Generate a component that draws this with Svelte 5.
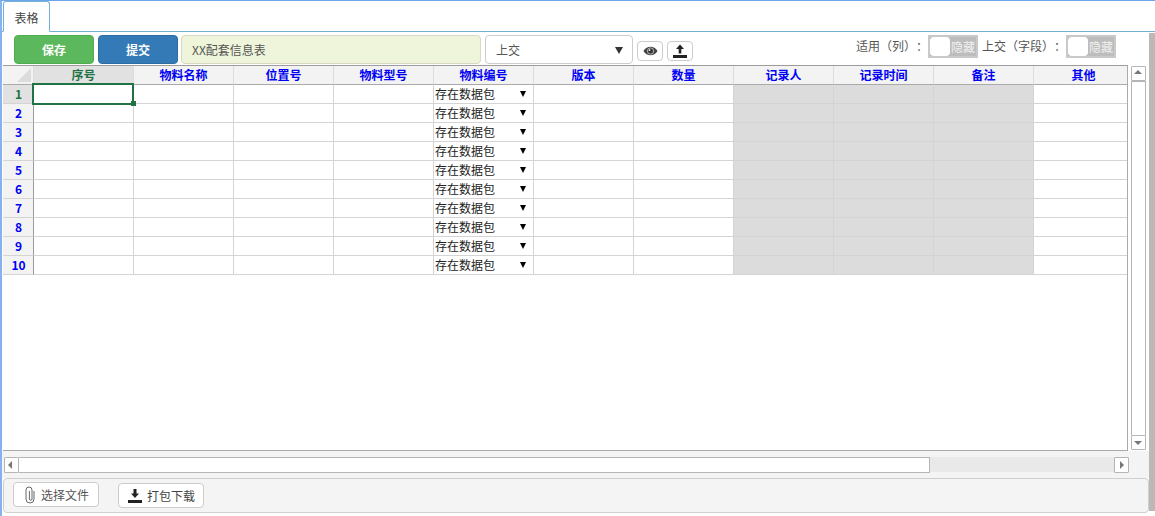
<script>
  const cols = ['物料名称','位置号','物料型号','物料编号','版本','数量','记录人','记录时间','备注','其他'];
  const rows = [1,2,3,4,5,6,7,8,9,10];
  const cellClass = (i) => (i >= 6 && i <= 8 ? 'cell gray' : 'cell');
</script>

<div class="page">
  <div class="main">
    <div class="tabs"><div class="tab">表格</div></div>

    <div class="toolbar">
      <button class="btn save">保存</button>
      <button class="btn submit">提交</button>
      <div class="title">XX配套信息表</div>
      <div class="select">上交<span class="caret"></span></div>
      <button class="icon-btn" aria-label="view">
        <svg width="15" height="10" viewBox="0 0 16 10"><path d="M0.5 5C2.5 1.8 5 .4 8 .4s5.500 1.400 7.500 4.600C13.500 8.200 11 9.600 8 9.600S2.500 8.200 .5 5z" fill="#444"/><circle cx="8" cy="5" r="3.300" fill="#333" stroke="#ddd" stroke-width=".8"/><circle cx="7" cy="4" r="1" fill="#fff"/></svg>
      </button>
      <button class="icon-btn" aria-label="upload">
        <svg width="14" height="14" viewBox="0 0 14 14"><path d="M7 .5L11 5H8.300v4.500H5.700V5H3z" fill="#222"/><rect y="11" width="14" height="3" fill="#222"/></svg>
      </button>
      <div class="switches">
        <span>适用（列）：</span>
        <div class="toggle"><i class="knob"></i><em>隐藏</em></div>
        <span class="second">上交（字段）：</span>
        <div class="toggle"><i class="knob"></i><em>隐藏</em></div>
      </div>
    </div>

    <div class="sheet-row">
      <div class="sheet">
        <div class="grid">
          <div class="corner"><span></span></div>
          <div class="head active">序号</div>
          {#each cols as c}<div class="head">{c}</div>{/each}
          {#each rows as r}
            <div class="num" class:cur={r === 1}>{r}</div>
            <div class="cell" class:selected={r === 1}>{#if r === 1}<i class="ring"></i><i class="handle"></i>{/if}</div>
            {#each cols as c, i}
              <div class={cellClass(i)}>{#if i === 3}<span class="pack">存在数据包</span><span class="mini"></span>{/if}</div>
            {/each}
          {/each}
        </div>
      </div>
      <div class="vbar">
        <div class="arrow-btn"><span class="up"></span></div>
        <div class="vthumb"></div>
        <div class="arrow-btn"><span class="down"></span></div>
      </div>
    </div>

    <div class="hbar">
      <div class="harrow"><span class="left"></span></div>
      <div class="hthumb"></div>
      <div class="htrack"></div>
      <div class="harrow"><span class="right"></span></div>
    </div>

    <div class="footer">
      <button class="foot-btn file">
        <svg width="10" height="18" viewBox="0 0 10 18" fill="none" stroke="#666" stroke-width="1"><path d="M9 5v8a4 4 0 0 1-8 0V4a3 3 0 0 1 6 0v9a1.300 1.300 0 0 1-2.600 0V5"/></svg>
        选择文件
      </button>
      <button class="foot-btn pack-btn">
        <svg width="14" height="14" viewBox="0 0 14 14"><path d="M5.500 0h3v4.500H11L7 9 3 4.500h2.500z" fill="#222"/><rect y="11" width="14" height="3" fill="#222"/></svg>
        打包下载
      </button>
    </div>
  </div>
  <div class="pagebar"></div>
</div>

<style>
  :global(body) { margin: 0; background: #fff; }
  .page {
    width: 1155px; height: 516px; box-sizing: border-box;
    border-top: 1px solid #6ea3ee; border-left: 2px solid #86b3f0;
    display: flex; overflow: hidden;
    font: 12px "Noto Sans CJK SC", "Liberation Sans", sans-serif; color: #555;
    text-spacing-trim: space-all;
  }
  .main { width: 1147px; display: flex; flex-direction: column; }
  .pagebar { width: 6px; margin-top: 32px; height: 478px; background: #bcb8b5; }

  .tabs { height: 31px; box-sizing: border-box; border-bottom: 1px solid #71b2d3; padding: 0 0 0 1px; margin-right: -6px; flex: none; position: relative; z-index: 1; }
  .tab {
    width: 47px; height: 31px; box-sizing: border-box;
    border: 1px solid #71b2d3; border-bottom: 1px solid #fff; border-radius: 3px 3px 0 0;
    text-align: center; line-height: 31px; color: #444; background: #fff;
  }

  .toolbar { height: 33px; display: flex; align-items: flex-start; padding: 3px 0 0 12px; box-sizing: border-box; flex: none; }
  button { font-family: inherit; padding: 0; cursor: pointer; }
  .btn {
    width: 80px; height: 29px; margin-right: 4px; border-radius: 4px; color: #fff;
    font-size: 12px; font-weight: 700; line-height: 27px;
  }
  .save { background: #5cb85c; border: 1px solid #4cae4c; }
  .submit { background: #337ab7; border: 1px solid #2e6da4; margin-right: 3px; }
  .title {
    width: 300px; height: 29px; box-sizing: border-box; margin-right: 4px;
    background: #eff5da; border: 1px solid #d8d8c4; border-radius: 4px;
    padding-left: 10px; line-height: 28px; color: #555;
  }
  .select {
    width: 148px; height: 29px; box-sizing: border-box; margin-right: 4px; position: relative;
    border: 1px solid #ccc; border-radius: 4px; background: #fff; padding-left: 10px; line-height: 28px;
  }
  .caret { position: absolute; right: 9px; top: 11px; border: 4px solid transparent; border-top: 7px solid #333; border-bottom: 0; }
  .icon-btn {
    width: 26px; height: 20px; margin: 6px 4px 0 0; box-sizing: border-box; background: #fff;
    border: 1px solid #ccc; border-radius: 4px; display: flex; align-items: center; justify-content: center;
  }
  .switches { display: flex; align-items: flex-start; margin-left: auto; margin-right: 33px; line-height: 22px; color: #555; }
  .second { margin-left: 4px; }
  .toggle {
    width: 50px; height: 23px; box-sizing: border-box; border: 2px solid #c9c9c9; background: #bdbdbd;
    display: flex; align-items: center; position: relative;
  }
  .toggle::before {
    content: ""; position: absolute; inset: -2px; pointer-events: none;
    background:
      linear-gradient(#f2f2f2, #f2f2f2) 1px 1px / 2px 2px no-repeat,
      linear-gradient(#f2f2f2, #f2f2f2) right 1px top 1px / 2px 2px no-repeat,
      linear-gradient(#f2f2f2, #f2f2f2) 1px bottom 1px / 2px 2px no-repeat,
      linear-gradient(#f2f2f2, #f2f2f2) right 1px bottom 1px / 2px 2px no-repeat;
  }
  .knob { width: 20px; height: 19px; background: #fff; border-radius: 4px; flex: none; }
  .toggle em { font-style: normal; color: #f1f1f1; font-size: 12px; line-height: 19px; white-space: nowrap; margin-left: 1px; width: 25px; overflow: hidden; }

  .sheet-row { display: flex; height: 386px; flex: none; margin-left: 1px; }
  .sheet { width: 1125px; box-sizing: border-box; border-top: 1px solid #9c9c9c; border-bottom: 1px solid #aaa; border-right: 1px solid #aaa; overflow: hidden; }
  .grid { display: grid; grid-template-columns: 31px repeat(11, 100px); grid-auto-rows: 19px; width: 1131px; grid-template-rows: 19px repeat(10, 19px); }
  .corner { background: #f3f3f3; border-right: 1px solid #dcdcdc; border-bottom: 1px solid #aaa; box-sizing: border-box; position: relative; }
  .corner span { position: absolute; right: 2px; bottom: 2px; border-style: solid; border-width: 0 0 14px 14px; border-color: transparent transparent #dcdcdc transparent; }
  .head {
    background: #f3f3f3; color: #0000f5; font-weight: 700; text-align: center; line-height: 17px; font-size: 12px;
    box-sizing: border-box; border-right: 1px solid #dcdcdc; border-bottom: 1px solid #aaa;
  }
  .head.active { background: #e1e1e1; color: #217346; }
  .num {
    background: #f3f3f3; color: #0000f5; font-weight: 700; text-align: center; line-height: 18px; font-size: 12px;
    box-sizing: border-box; border-right: 1px solid #9c9c9c; border-bottom: 1px solid #d4d4d4; padding-left: 1px;
  }
  .num.cur { background: #e1e1e1; color: #217346; }
  .cell {
    box-sizing: border-box; border-right: 1px solid #d4d4d4; border-bottom: 1px solid #d4d4d4;
    position: relative; color: #222; line-height: 18px;
  }
  .cell.gray { background: #dcdcdc; }
  .selected { z-index: 1; }
  .ring { position: absolute; left: -2px; right: -1px; top: -2px; bottom: -2px; border: 2px solid #217346; }
  .handle { position: absolute; right: -3px; bottom: -3px; width: 5px; height: 5px; background: #217346; }
  .pack { display: block; padding-left: 1px; font-size: 12px; color: #222; }
  .mini { position: absolute; right: 7px; top: 6px; border: 3px solid transparent; border-top: 6px solid #000; border-bottom: 0; border-left-width: 3.500px; border-right-width: 3.500px; }

  .vbar { width: 15px; margin-left: 3px; box-sizing: border-box; display: flex; flex-direction: column; height: 385px; padding-top: 1px; }
  .arrow-btn { height: 15px; flex: none; box-sizing: border-box; border: 1px solid #b5b5b5; background: #fff; position: relative; border-radius: 1px; }
  .vthumb { flex: 1; box-sizing: border-box; border: 1px solid #b5b5b5; border-bottom: 0; background: #fff; }
  .up, .down, .left, .right { position: absolute; width: 0; height: 0; border: 4px solid transparent; }
  .up { left: 2px; top: 3px; border-bottom-color: #777; border-top-width: 0; }
  .down { left: 2px; top: 5px; border-top-color: #777; border-bottom-width: 0; }

  .hbar { display: flex; height: 27px; background: #f4f4f4; box-sizing: border-box; padding: 6px 0 5px 2px; margin-right: 20px; flex: none; box-shadow: 20px 0 0 #f4f4f4; }
  .harrow { width: 15px; height: 16px; box-sizing: border-box; border: 1px solid #b5b5b5; background: #fff; position: relative; flex: none; border-radius: 1px; }
  .hthumb { width: 911px; height: 16px; box-sizing: border-box; border: 1px solid #b5b5b5; border-left: 0; background: #fff; flex: none; }
  .htrack { flex: 1; height: 15px; background: #e9e9e9; }
  .left { left: 3px; top: 3px; border-right-color: #777; border-left-width: 0; }
  .right { left: 5px; top: 3px; border-left-color: #777; border-right-width: 0; }

  .footer {
    height: 35px; box-sizing: border-box; margin-left: 1px; width: 1146px;
    background: #f4f4f4; border: 1px solid #cfcfcf; border-radius: 4px; display: flex; align-items: flex-start; padding: 3px 0 0 9px; flex: none;
  }
  .foot-btn {
    height: 25px; box-sizing: border-box; border: 1px solid #ccc; border-radius: 4px; background: #fff;
    color: #555; font-size: 12px; display: flex; align-items: center; flex: none;
  }
  .file { width: 86px; padding-left: 11px; gap: 6px; margin-right: 19px; }
  .pack-btn { width: 86px; padding-left: 9px; gap: 5px; margin-top: 1px; color: #444; }
</style>
